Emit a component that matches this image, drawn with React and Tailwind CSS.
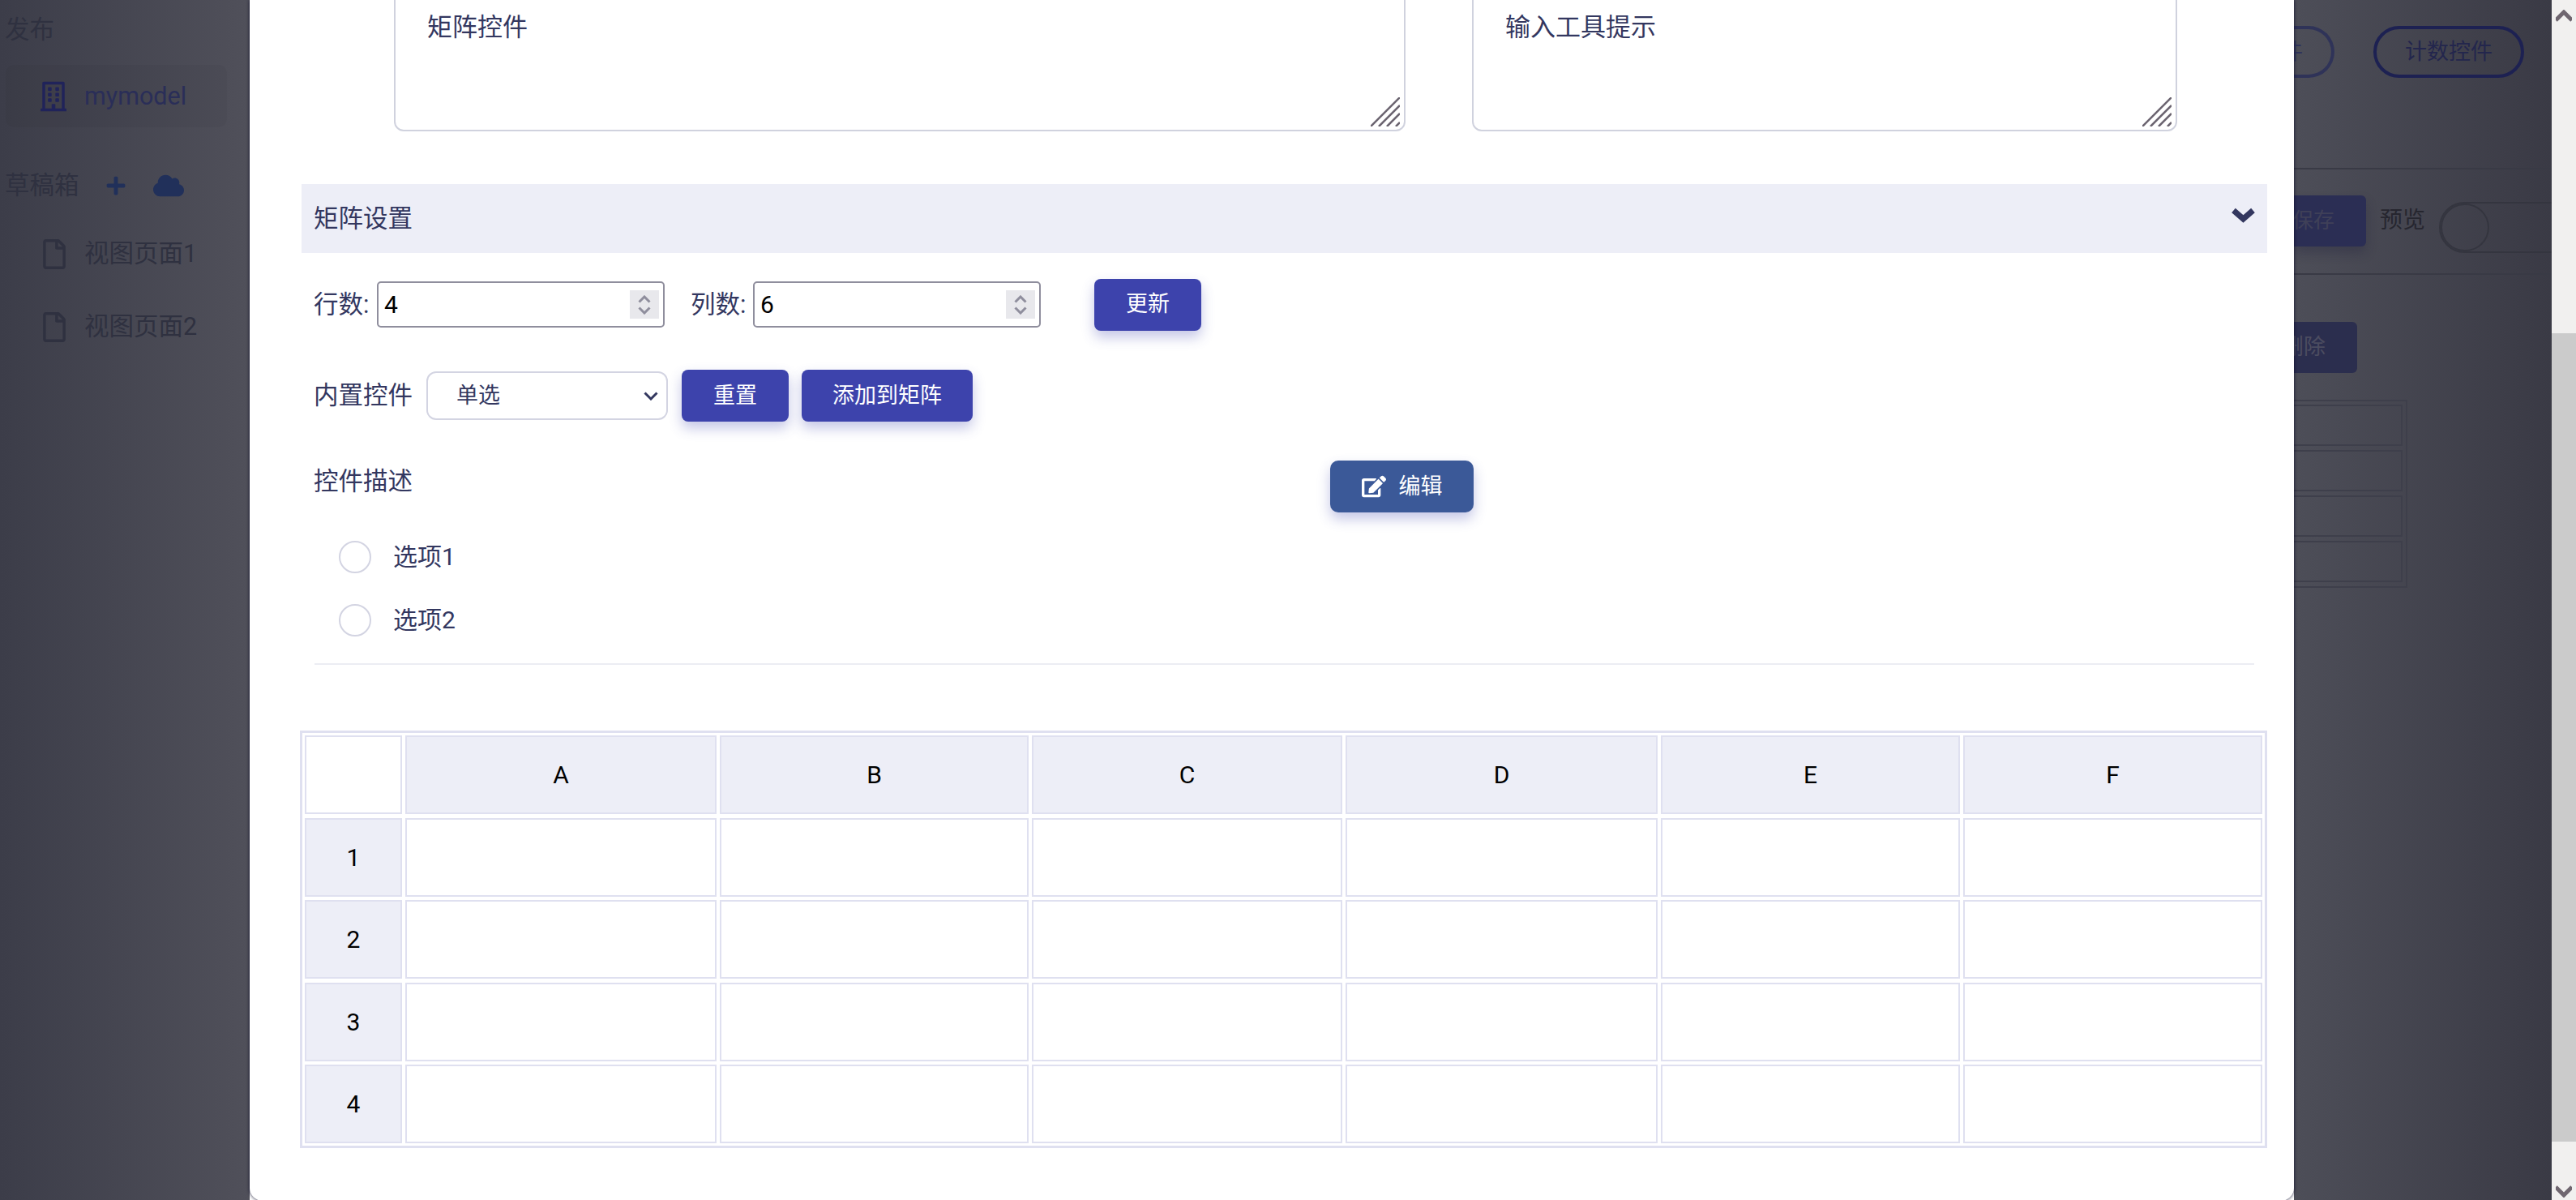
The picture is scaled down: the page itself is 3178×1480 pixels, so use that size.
import { FaRegBuilding, FaPlus, FaCloud, FaRegFile, FaEdit } from 'react-icons/fa';

const columns = ['A', 'B', 'C', 'D', 'E', 'F'];
const rows = ['1', '2', '3', '4'];

const ResizeGrip = () => (
  <svg className="absolute right-[5px] bottom-[4px]" width="36" height="36" viewBox="0 0 36 36">
    <path d="M0 36L36 0M10 36L36 10M20 36L36 20M31 36L36 31" stroke="#6b6470" strokeWidth="2.5" fill="none" />
  </svg>
);

const TextBox = ({ text, className }) => (
  <div className={`relative h-[190px] rounded-[12px] border-[2px] border-[#d0d2de] bg-white pl-[39px] pt-[38px] text-[31px] leading-[44px] text-[#33375f] ${className}`}>
    {text}
    <ResizeGrip />
  </div>
);

const NumberBox = ({ value }) => (
  <div className="flex h-[57px] w-[355px] items-center justify-between rounded-[5px] border-[2px] border-[#8f8e9d] bg-white pl-[7px] pr-[5px] text-[30px] text-black">
    <span>{value}</span>
    <span className="flex h-[35px] w-[36px] flex-col items-center justify-center gap-[4px] bg-[#e8e8ec]">
      <svg width="16" height="10" viewBox="0 0 16 10"><path d="M1.5 8.5L8 2l6.5 6.5" stroke="#8f8e9d" strokeWidth="3" fill="none" /></svg>
      <svg width="16" height="10" viewBox="0 0 16 10"><path d="M1.5 1.5L8 8l6.5-6.5" stroke="#8f8e9d" strokeWidth="3" fill="none" /></svg>
    </span>
  </div>
);

const ActionButton = ({ children, className }) => (
  <button className={`flex h-[64px] items-center justify-center rounded-[8px] bg-[#3d43ac] text-[27px] text-white shadow-[0_8px_16px_rgba(61,67,172,0.3)] ${className}`}>
    {children}
  </button>
);

const RadioOption = ({ label }) => (
  <div className="flex h-[40px] items-center pl-[46px] text-[30px] text-[#33375f]">
    <span className="h-[40px] w-[40px] rounded-full border-[2px] border-[#d3d4e2] bg-white" />
    <span className="-mt-[2px] ml-[27px]">{label}</span>
  </div>
);

const MatrixTable = () => (
  <div className="-ml-[2px] mt-[81px] w-[2427px] border-[3px] border-[#dfe0f0] p-[3px] text-[30px] text-black">
    <div className="grid grid-cols-[120px_384px_381px_383px_385px_369px_369px] grid-rows-[97px_97px_97px_97px_97px] gap-x-[4px] gap-y-[4.5px]">
      <div className="border-[2px] border-[#dfe0f0] bg-white" />
      {columns.map((c) => (
        <div key={c} className="flex items-center justify-center border-[2px] border-[#dfe0f0] bg-[#edeef7]">{c}</div>
      ))}
      {rows.map((r) => (
        <div key={r} className="contents">
          <div className="flex items-center justify-center border-[2px] border-[#dfe0f0] bg-[#edeef7]">{r}</div>
          {columns.map((c) => (
            <div key={c} className="border-[2px] border-[#dfe0f0] bg-white" />
          ))}
        </div>
      ))}
    </div>
  </div>
);

const Modal = () => (
  <main className="relative z-10 h-[1481px] w-[2522px] shrink-0 overflow-hidden rounded-b-[16px] bg-white pl-[64px] pr-[33px] shadow-[0_0_4px_rgba(10,10,40,0.9)]">
    {/* Text areas, top edge scrolled away */}
    <div className="-mt-[28px] ml-[114px] flex gap-[82px]">
      <TextBox text="矩阵控件" className="w-[1248px]" />
      <TextBox text="输入工具提示" className="w-[870px]" />
    </div>

    {/* Section header */}
    <div className="mt-[65px] flex h-[85px] items-center justify-between bg-[#edeef7] pl-[15px] pr-[15px] text-[30.5px] text-[#33375f]">
      <span>矩阵设置</span>
      <svg className="-mt-[7px]" width="29" height="20" viewBox="0 0 29 20">
        <path d="M2.5 3.5L14.5 14L26.5 3.5" stroke="#33375f" strokeWidth="7" fill="none" />
      </svg>
    </div>

    {/* Rows and columns */}
    <div className="mt-[35px] flex h-[57px] items-center pl-[15px] text-[30.5px] text-[#33375f]">
      <span className="w-[78px]">行数:</span>
      <NumberBox value="4" />
      <span className="ml-[32px] w-[77px]">列数:</span>
      <NumberBox value="6" />
      <ActionButton className="ml-[66px] w-[132px]">更新</ActionButton>
    </div>

    {/* Built-in control */}
    <div className="mt-[52px] flex h-[64px] items-center pl-[15px] text-[30.5px] text-[#33375f]">
      <span className="w-[139px]">内置控件</span>
      <div className="flex h-[60px] w-[298px] items-center justify-between rounded-[12px] border-[2px] border-[#d3d4e2] bg-white pl-[35px] pr-[10px] text-[27px]">
        <span>单选</span>
        <svg width="18" height="11" viewBox="0 0 18 11"><path d="M1.5 1.5L9 9l7.5-7.5" stroke="#33375f" strokeWidth="3" fill="none" /></svg>
      </div>
      <ActionButton className="ml-[17px] w-[132px]">重置</ActionButton>
      <ActionButton className="ml-[16px] w-[211px]">添加到矩阵</ActionButton>
    </div>

    {/* Description */}
    <div className="mt-[48px] flex h-[64px] items-start pl-[15px] text-[30.5px] text-[#33375f]">
      <span className="mt-[3px] w-[1254px]">控件描述</span>
      <button className="flex h-[64px] w-[177px] items-center justify-center gap-[16px] rounded-[10px] bg-[#3b5998] text-[27px] text-white shadow-[0_8px_16px_rgba(61,67,172,0.3)]">
        <FaEdit size={30} />
        <span>编辑</span>
      </button>
    </div>

    <div className="mt-[35px] flex flex-col gap-[38px]">
      <RadioOption label="选项1" />
      <RadioOption label="选项2" />
    </div>

    <div className="ml-[16px] mr-[16px] mt-[33px] h-[2px] bg-[#ecedf3]" />

    <MatrixTable />
  </main>
);

const Sidebar = () => (
  <aside className="h-full w-[308px] shrink-0 overflow-hidden bg-gradient-to-r from-[#3c3d49] to-[#50505a] text-[30.5px] text-[#2f3140]">
    <div className="mt-[15px] pl-[6px] leading-[44px]">发布</div>
    <div className="ml-[7px] mt-[21px] flex h-[77px] w-[273px] items-center rounded-[10px] bg-[#00000008] pl-[43px] text-[#2a2e58]">
      <FaRegBuilding size={38} className="w-[32px] text-[#20235a]" />
      <span className="ml-[22px]">mymodel</span>
    </div>
    <div className="mt-[50px] flex h-[44px] items-center pl-[6px]">
      <span>草稿箱</span>
      <FaPlus size={26} className="ml-[32px] text-[#21305a]" />
      <FaCloud size={38} className="ml-[33px] text-[#21305a]" />
    </div>
    <div className="mt-[40px] flex h-[44px] items-center pl-[53px]">
      <FaRegFile size={37} className="w-[28px]" />
      <span className="ml-[23px]">视图页面1</span>
    </div>
    <div className="mt-[46px] flex h-[44px] items-center pl-[53px]">
      <FaRegFile size={37} className="w-[28px]" />
      <span className="ml-[23px]">视图页面2</span>
    </div>
  </aside>
);

const BackgroundPanel = () => (
  <section className="h-full w-[318px] shrink-0 overflow-hidden bg-gradient-to-r from-[#4d4e58] to-[#3a3a45] text-[27px]">
    <div className="flex h-[209px] items-start border-b-[2px] border-[#393a45] pt-[32px]">
      <div className="-ml-[10px] flex h-[64px] w-[60px] shrink-0 items-center rounded-r-[32px] border-y-[4px] border-r-[4px] border-[#2f3358] whitespace-nowrap text-[#30345c]">
        <span className="-ml-[6px]">件</span>
      </div>
      <div className="ml-[48px] flex h-[64px] w-[186px] shrink-0 items-center justify-center rounded-[32px] border-[4px] border-[#1d2152] text-[#23264d]">计数控件</div>
    </div>
    <div className="flex h-[130px] items-start border-b-[2px] border-[#393a45] pt-[32px]">
      <div className="flex h-[63px] w-[89px] shrink-0 items-center justify-end overflow-hidden rounded-r-[6px] bg-[#2b2e54] pr-[39px] text-[26px] whitespace-nowrap text-[#3f4058] shadow-[0_8px_14px_rgba(30,30,60,0.3)]">保存</div>
      <span className="ml-[17px] mt-[11px] shrink-0 text-[28px] leading-[40px] text-[#26262f]">预览</span>
      <div className="ml-[17px] mt-[8px] h-[63px] w-[180px] shrink-0 rounded-full border-[2px] border-[#34353f]">
        <div className="h-[59px] w-[60px] rounded-full border-[2px] border-[#34353f]" />
      </div>
    </div>
    <div className="mt-[58px] flex h-[63px] w-[78px] items-center justify-end overflow-hidden rounded-r-[6px] bg-[#2b2e4e] pr-[39px] whitespace-nowrap text-[#4b4c60]">删除</div>
    <div className="mt-[33px] flex h-[232px] w-[140px] flex-col gap-[5px] border-y-[2px] border-r-[2px] border-[#3e3f4b] py-[4px] pr-[4px]">
      {rows.map((r) => (
        <div key={r} className="h-[51px] border-y-[2px] border-r-[2px] border-[#3e3f4b]" />
      ))}
    </div>
  </section>
);

const Scrollbar = () => (
  <div className="flex h-full w-[30px] shrink-0 flex-col bg-[#f1f0ef]">
    <div className="flex h-[411px] items-start justify-center pt-[12px]">
      <svg width="20" height="17" viewBox="0 0 20 17"><path d="M0 13L10 3l10 10" stroke="#6f666f" strokeWidth="5" fill="none" /></svg>
    </div>
    <div className="h-[997px] bg-[#cbcbcb]" />
    <div className="flex flex-1 items-end justify-center pb-[3px]">
      <svg width="20" height="17" viewBox="0 0 20 17"><path d="M0 4l10 10L20 4" stroke="#6f666f" strokeWidth="5" fill="none" /></svg>
    </div>
  </div>
);

export default function App() {
  return (
    <div className="flex h-screen w-screen overflow-hidden font-[Roboto,'Noto_Sans_CJK_SC',sans-serif]">
      <Sidebar />
      <Modal />
      <BackgroundPanel />
      <Scrollbar />
    </div>
  );
}
